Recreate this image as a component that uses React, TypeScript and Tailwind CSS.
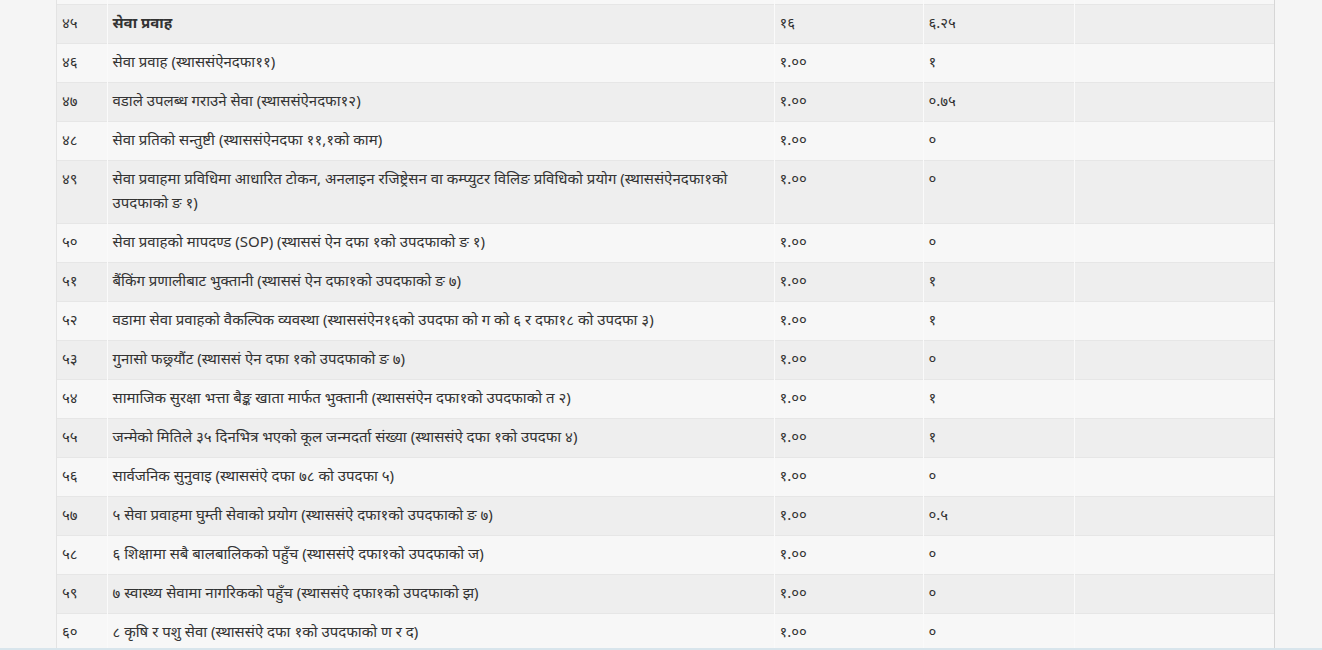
import React from 'react';

type Row = { sn: string; title: string; full: string; got: string; bold?: boolean };

const rows: Row[] = [
  { sn: '४५', title: 'सेवा प्रवाह', full: '१६', got: '६.२५', bold: true },
  { sn: '४६', title: 'सेवा प्रवाह (स्थाससंऐनदफा११)', full: '१.००', got: '१' },
  { sn: '४७', title: 'वडाले उपलब्ध गराउने सेवा (स्थाससंऐनदफा१२)', full: '१.००', got: '०.७५' },
  { sn: '४८', title: 'सेवा प्रतिको सन्तुष्टी (स्थाससंऐनदफा ११,१को काम)', full: '१.००', got: '०' },
  {
    sn: '४९',
    title:
      'सेवा प्रवाहमा प्रविधिमा आधारित टोकन, अनलाइन रजिष्ट्रेसन वा कम्प्युटर विलिङ प्रविधिको प्रयोग (स्थाससंऐनदफा१को उपदफाको ङ १)',
    full: '१.००',
    got: '०',
  },
  { sn: '५०', title: 'सेवा प्रवाहको मापदण्ड (SOP) (स्थाससं ऐन दफा १को उपदफाको ङ १)', full: '१.००', got: '०' },
  { sn: '५१', title: 'बैंकिंग प्रणालीबाट भुक्तानी (स्थाससं ऐन दफा१को उपदफाको ङ ७)', full: '१.००', got: '१' },
  {
    sn: '५२',
    title: 'वडामा सेवा प्रवाहको वैकल्पिक व्यवस्था (स्थाससंऐन१६को उपदफा को ग को ६ र दफा१८ को उपदफा ३)',
    full: '१.००',
    got: '१',
  },
  { sn: '५३', title: 'गुनासो फछ्र्यौंट (स्थाससं ऐन दफा १को उपदफाको ङ ७)', full: '१.००', got: '०' },
  {
    sn: '५४',
    title: 'सामाजिक सुरक्षा भत्ता बैङ्क खाता मार्फत भुक्तानी (स्थाससंऐन दफा१को उपदफाको त २)',
    full: '१.००',
    got: '१',
  },
  {
    sn: '५५',
    title: 'जन्मेको मितिले ३५ दिनभित्र भएको कूल जन्मदर्ता संख्या (स्थाससंऐ दफा १को उपदफा ४)',
    full: '१.००',
    got: '१',
  },
  { sn: '५६', title: 'सार्वजनिक सुनुवाइ (स्थाससंऐ दफा ७८ को उपदफा ५)', full: '१.००', got: '०' },
  { sn: '५७', title: '५ सेवा प्रवाहमा घुम्ती सेवाको प्रयोग (स्थाससंऐ दफा१को उपदफाको ङ ७)', full: '१.००', got: '०.५' },
  { sn: '५८', title: '६ शिक्षामा सबै बालबालिकको पहुँच (स्थाससंऐ दफा१को उपदफाको ज)', full: '१.००', got: '०' },
  { sn: '५९', title: '७ स्वास्थ्य सेवामा नागरिकको पहुँच (स्थाससंऐ दफा१को उपदफाको झ)', full: '१.००', got: '०' },
  { sn: '६०', title: '८ कृषि र पशु सेवा (स्थाससंऐ दफा १को उपदफाको ण र द)', full: '१.००', got: '०' },
];

const cell = 'border-r border-[#fafafa] px-[5px] pt-[5px] pb-[9px] align-top';

export default function App() {
  return (
    <div
      className="relative h-[650px] overflow-hidden bg-[#f5f5f5] text-[15px] leading-[24px] text-[#333]"
      style={{ fontFamily: '"Noto Sans", "Open Sans", sans-serif' }}
    >
      <div className="ml-[56px] w-[1219px] border-l border-r border-l-[#e3e3e3] border-r-[#d6d6d6]">
        <table className="w-full table-fixed border-collapse">
          <colgroup>
            <col className="w-[50px]" />
            <col className="w-[667px]" />
            <col className="w-[149px]" />
            <col className="w-[151px]" />
            <col />
          </colgroup>
          <tbody>
            {/* tail of the row above, scrolled off */}
            <tr className="h-[4px] border-b border-[#e6e6e6] bg-[#f7f7f7]">
              <td className="border-r border-[#fafafa]" />
              <td className="border-r border-[#fafafa]" />
              <td className="border-r border-[#fafafa]" />
              <td className="border-r border-[#fafafa]" />
              <td />
            </tr>
            {rows.map((r, i) => (
              <tr
                key={r.sn}
                className={`border-b border-[#e6e6e6] ${i % 2 === 0 ? 'bg-[#eeeeee]' : 'bg-[#f7f7f7]'}`}
              >
                <td className={cell}>{r.sn}</td>
                <td className={`${cell} ${r.bold ? 'font-bold' : ''}`}>{r.title}</td>
                <td className={cell}>{r.full}</td>
                <td className={cell}>{r.got}</td>
                <td className="px-[5px] pt-[5px] pb-[9px]" />
              </tr>
            ))}
          </tbody>
        </table>
      </div>
      {/* horizontal scroll strip at the bottom edge */}
      <div className="absolute bottom-0 left-0 right-0 h-[2px] bg-[#d8e5ec]" />
    </div>
  );
}
